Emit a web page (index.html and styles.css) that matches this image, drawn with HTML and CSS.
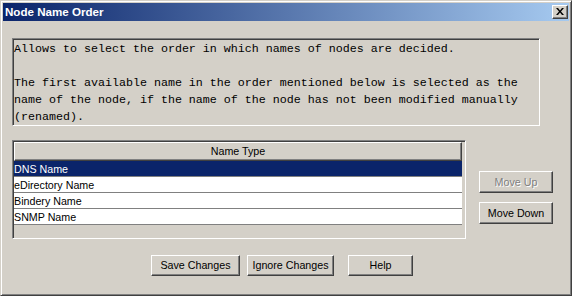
FILE: index.html
```html
<!DOCTYPE html>
<html>
<head>
<meta charset="utf-8">
<link rel="stylesheet" href="styles.css">
</head>
<body>
<div class="window">
  <div class="titlebar">
    <span class="title">Node Name Order</span>
    <span class="close"><svg width="8" height="7" viewBox="0 0 8 7"><path d="M0 0h2l2 2.5L6 0h2L5 3.5 8 7H6L4 4.5 2 7H0l3-3.5z" fill="#000"/></svg></span>
  </div>
  <div class="content">
    <div class="desc">Allows to select the order in which names of nodes are decided.

The first available name in the order mentioned below is selected as the
name of the node, if the name of the node has not been modified manually
(renamed).</div>
    <div class="middle">
      <div class="table">
        <div class="th">Name Type</div>
        <div class="row selected">DNS Name</div>
        <div class="row">eDirectory Name</div>
        <div class="row">Bindery Name</div>
        <div class="row">SNMP Name</div>
      </div>
      <div class="side">
        <div class="btn disabled">Move Up</div>
        <div class="btn">Move Down</div>
      </div>
    </div>
    <div class="bottom">
      <div class="btn save">Save Changes</div>
      <div class="btn ignore">Ignore Changes</div>
      <div class="btn help">Help</div>
    </div>
  </div>
</div>
</body>
</html>
```

FILE: styles.css
```css
* { box-sizing: border-box; }
html, body { margin: 0; padding: 0; background: #d4d0c8; }
body { font-family: "Liberation Sans", Arial, sans-serif; font-size: 10.7px; color: #000; }

.window {
  width: 572px;
  height: 296px;
  background: #d4d0c8;
  border: 1px solid;
  border-color: #d4d0c8 #404040 #404040 #d4d0c8;
  box-shadow: inset 1px 1px #fff, inset -1px -1px #808080;
  padding: 2px;
  display: flex;
  flex-direction: column;
}

.titlebar {
  height: 18px;
  background: linear-gradient(to right, #0a246a, #a6caf0);
  display: flex;
  align-items: center;
  justify-content: space-between;
  padding-left: 2px;
  padding-right: 1px;
}
.title {
  color: #fff;
  font-weight: bold;
  font-size: 11.6px;
  line-height: 18px;
}
.close {
  width: 16px;
  height: 14px;
  background: #d4d0c8;
  border: 1px solid;
  border-color: #fff #404040 #404040 #fff;
  box-shadow: inset -1px -1px #808080;
  display: flex;
  align-items: center;
  justify-content: center;
  padding: 0 1px 1px 0;
}
.close svg { display: block; }

.content {
  flex: 1;
  display: flex;
  flex-direction: column;
  padding-left: 9px;
}

.desc {
  margin-top: 17px;
  width: 528px;
  height: 88px;
  border: 1px solid;
  border-color: #808080 #fff #fff #808080;
  box-shadow: inset 1px 1px #404040;
  padding: 2px 0 0 1px;
  font-family: "Liberation Mono", "Courier New", monospace;
  font-size: 11.667px;
  line-height: 17px;
  white-space: pre;
}

.middle {
  margin-top: 14px;
  display: flex;
  align-items: flex-start;
}

.table {
  width: 454px;
  height: 99px;
  border: 1px solid;
  border-color: #808080 #fff #fff #808080;
  box-shadow: inset 1px 1px #404040, inset -1px -1px #d4d0c8;
  padding: 1px 3px 0 1px;
  background: #d4d0c8;
}
.th {
  height: 19px;
  background: #d4d0c8;
  border: 1px solid;
  border-color: #fff #404040 #404040 #fff;
  box-shadow: inset -1px -1px #808080;
  text-align: center;
  line-height: 17px;
}
.row {
  height: 16px;
  line-height: 16px;
  background: #fff;
  border-bottom: 1px solid #808080;
  padding-left: 0;
  white-space: nowrap;
}
.row.selected {
  background: #0a246a;
  color: #fff;
}

.side {
  margin-left: 13px;
  margin-top: 31px;
  display: flex;
  flex-direction: column;
  gap: 9px;
}

.btn {
  height: 22px;
  background: #d4d0c8;
  border: 1px solid;
  border-color: #fff #404040 #404040 #fff;
  box-shadow: inset -1px -1px #808080;
  display: flex;
  align-items: center;
  justify-content: center;
  padding-bottom: 1px;
  white-space: nowrap;
}
.side .btn { width: 74px; }
.btn.disabled {
  color: #808080;
  text-shadow: 1px 1px #fff;
}

.bottom {
  margin-top: 16px;
  display: flex;
  padding-left: 139px;
}
.bottom .btn { height: 21px; }
.save { width: 89px; }
.ignore { width: 87px; margin-left: 7px; }
.help { width: 65px; margin-left: 14px; }
```
